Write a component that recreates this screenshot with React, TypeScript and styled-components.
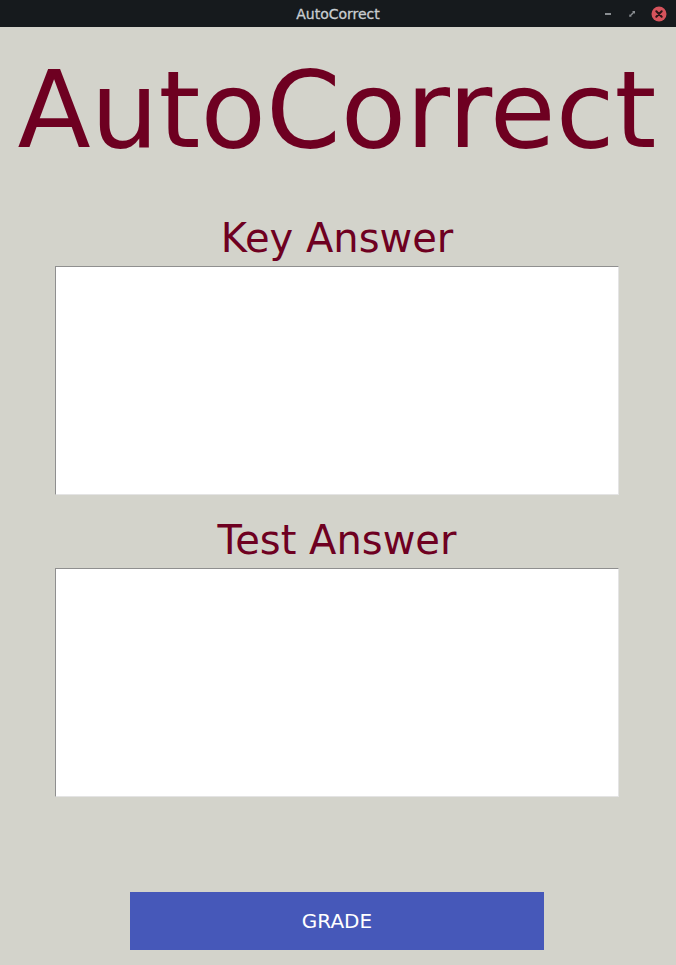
import React from 'react';
import styled, { createGlobalStyle } from 'styled-components';

const Global = createGlobalStyle`
   html, body {
      margin: 0;
      padding: 0;
      background: #d3d3cb;
   }
`;

const Window = styled.div`
   width: 676px;
   height: 965px;
   display: flex;
   flex-direction: column;
   background: #d3d3cb;
   font-family: 'DejaVu Sans', sans-serif;
   overflow: hidden;
`;

const TitleBar = styled.div`
   height: 27px;
   flex: none;
   background: #161a1d;
   display: grid;
   grid-template-columns: 1fr auto 1fr;
   align-items: center;
   padding: 0 10px;
   box-sizing: border-box;
`;

const TitleText = styled.span`
   grid-column: 2;
   color: #c9cdd1;
   font-size: 14px;
   font-weight: 500;
   -webkit-text-stroke: 0.3px #c9cdd1;
`;

const Controls = styled.div`
   grid-column: 3;
   justify-self: end;
   display: flex;
   align-items: center;
   gap: 14px;
   margin-right: -1px;
`;

const Body = styled.main`
   flex: 1;
   display: flex;
   flex-direction: column;
   align-items: center;
   padding-right: 2px;
`;

const Heading = styled.h1`
   margin: 21px 0 0;
   font-size: 107px;
   font-weight: normal;
   line-height: 124px;
   height: 124px;
   color: #6e0021;
   white-space: nowrap;
`;

const Label = styled.h2<{ $top: number }>`
   margin: ${(p) => p.$top}px 0 4px;
   font-size: 40px;
   font-weight: normal;
   line-height: 47px;
   height: 47px;
   color: #6e0021;
`;

const AnswerBox = styled.textarea`
   width: 564px;
   height: 229px;
   box-sizing: border-box;
   margin: 0;
   padding: 4px;
   resize: none;
   background: #fff;
   border-style: solid;
   border-width: 1px;
   border-color: #8f8f8f #e4e4e4 #e4e4e4 #8f8f8f;
   outline: none;
   font-family: 'DejaVu Sans', sans-serif;
   font-size: 14px;
`;

const GradeButton = styled.button`
   margin-top: 95px;
   width: 414px;
   height: 58px;
   border: none;
   background: #4658b9;
   color: #fff;
   font-family: 'DejaVu Sans', sans-serif;
   font-size: 20px;
   cursor: pointer;
`;

const App = () => {
   return (
      <>
         <Global />
         <Window>
            <TitleBar>
               <TitleText>AutoCorrect</TitleText>
               <Controls>
                  <svg width='10' height='10' viewBox='0 0 10 10'>
                     <rect x='2' y='4' width='6' height='2' fill='#8a8e92' />
                  </svg>
                  <svg width='10' height='10' viewBox='0 0 10 10'>
                     <path d='M5 2 H8 V5 Z' fill='#8a8e92' />
                     <path d='M2 5 V8 H5 Z' fill='#5a5e62' />
                     <path d='M3 7 L7 3' stroke='#8a8e92' strokeWidth='1.4' />
                  </svg>
                  <svg width='16' height='16' viewBox='0 0 16 16'>
                     <circle cx='8' cy='8' r='7.5' fill='#d6535c' />
                     <path d='M5.3 5.3 L10.7 10.7 M10.7 5.3 L5.3 10.7' stroke='#2a1517' strokeWidth='2' strokeLinecap='round' />
                  </svg>
               </Controls>
            </TitleBar>
            <Body>
               <Heading>AutoCorrect</Heading>
               <Label $top={43}>Key Answer</Label>
               <AnswerBox />
               <Label $top={22}>Test Answer</Label>
               <AnswerBox />
               <GradeButton>GRADE</GradeButton>
            </Body>
         </Window>
      </>
   );
};

export default App;
